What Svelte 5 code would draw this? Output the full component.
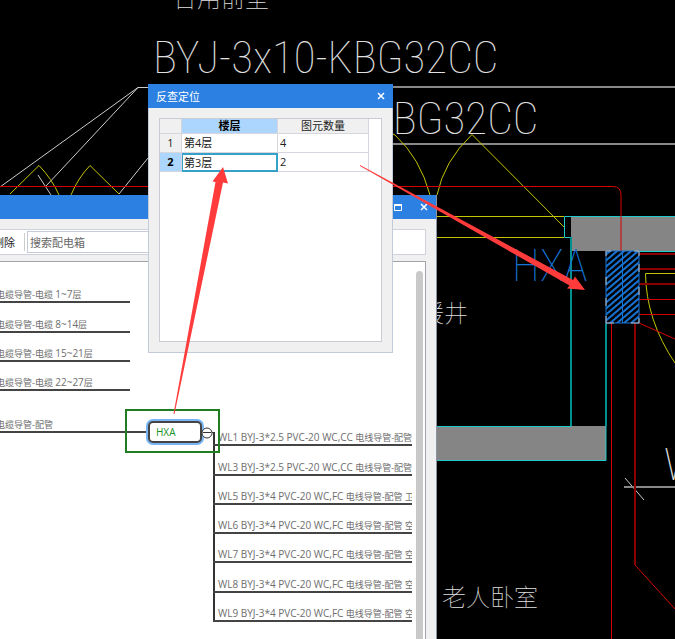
<script>
  const floors = [
    { name: '第4层', count: 4 },
    { name: '第3层', count: 2 }
  ];
  let selected = $state(1);
  let query = $state('');

  const risers = ['1~7', '8~14', '15~21', '22~27'];
  const circuits = [
    { cable: 'WL1 BYJ-3*2.5 PVC-20 WC,CC', conduit: '电线导管-配管' },
    { cable: 'WL3 BYJ-3*2.5 PVC-20 WC,CC', conduit: '电线导管-配管' },
    { cable: 'WL5 BYJ-3*4 PVC-20 WC,FC', conduit: '电线导管-配管 卫' },
    { cable: 'WL6 BYJ-3*4 PVC-20 WC,FC', conduit: '电线导管-配管 空' },
    { cable: 'WL7 BYJ-3*4 PVC-20 WC,FC', conduit: '电线导管-配管 空' },
    { cable: 'WL8 BYJ-3*4 PVC-20 WC,FC', conduit: '电线导管-配管 空' },
    { cable: 'WL9 BYJ-3*4 PVC-20 WC,FC', conduit: '电线导管-配管 空' }
  ];
</script>

<main class="desktop">
  <svg class="drawing" aria-label="CAD">
    <defs>
      <pattern id="hatch" width="7" height="6" patternUnits="userSpaceOnUse">
        <path d="M-1 7L8 -1M-1 1L1 -1M6 7L8 5" stroke="#1673d4" stroke-width="2" />
      </pattern>
    </defs>

    <g class="cad-text">
      <text x="173" y="7" class="zh">合用前室</text>
      <text x="153" y="73">BYJ-3x10-KBG32CC</text>
      <text x="193" y="134">BYJ-3x10-KBG32CC</text>
      <text x="420" y="322" class="zh">暖井</text>
      <text x="442" y="606" class="zh">老人卧室</text>
      <text x="664" y="480">W</text>
    </g>

    <g class="white">
      <path d="M0 187L138 87.500H148M138 87.500L46 186M38 175L51 195M119 194L148 158M625 478L644 500" />
      <path class="wide" d="M393 87H675M393 144H675M624 487H675" />
    </g>

    <path class="yellow" d="M10 194L39 165.500Q52 179 59 195M71 195Q78 178 90 165.500L119 194M393 134L395 135Q420 158 430 195M437 195Q444 161 472 134.500L564 227M437 216.500H564M437 237.500H564M675 273.500H645.500Q646 320 675 363" />

    <rect x="571" y="217" width="104" height="34" fill="#858585" />
    <rect x="437" y="426" width="169" height="35" fill="#858585" />
    <path class="cyan" d="M675 216.500H564.500V237.500H571M639 251.500H675M437 426.500H571M437 460.500H606V426" />
    <path class="teal" d="M571 237V426M606 323V426" />

    <path class="red" d="M0 186.500H613Q621 186.500 621 195V251M639 299.500H675M639 314.500H675M639 323L675 339M635 565L675 609" />
    <path class="red" d="M611.500 323V639" />
    <path class="dark-red" d="M639 254H675M639 269H675M639 284H675M635 323V565" />

    <rect x="606" y="251" width="33" height="72" fill="url(#hatch)" stroke="#1673d4" />
    <path d="M622.500 251V323" stroke="#1673d4" />
    <path d="M606 256V251H611M634 251H639V256M639 318V323H631M614 323H606V316M606 277V285M606 298V306M639 264V272M639 287V295" stroke="#bbb" fill="none" />
    <text x="512" y="281" class="tag">HXA</text>
  </svg>

  <section class="window browser">
    <header class="titlebar">
      <button aria-label="最大化">
        <svg width="8" height="7"><path d="M0.500 1V6.500H7.500V1" stroke-width="1" /><path d="M0 1H8" stroke-width="2" /></svg>
      </button>
      <button aria-label="关闭">
        <svg width="8" height="8"><path d="M1 1L7 7M7 1L1 7" /></svg>
      </button>
    </header>
    <div class="toolbar">
      <button class="delete">删除</button>
      <input type="text" aria-label="搜索配电箱" placeholder="搜索配电箱" bind:value={query} />
    </div>
    <div class="canvas">
      <ul class="wires risers">
        {#each risers as riser}
          <li><span>电缆导管-电缆 <span class="latin">{riser}</span>层</span></li>
        {/each}
      </ul>
      <div class="wires feed">电缆导管-配管</div>
      <button class="node">HXA</button>
      <ul class="wires circuits">
        {#each circuits as circuit}
          <li><span><span class="latin">{circuit.cable}</span> {circuit.conduit}</span></li>
        {/each}
      </ul>
      <button class="toggle" aria-label="折叠">
        <svg width="14" height="12"><circle cx="6" cy="6" r="5" /><path d="M2 5.500H10M11 5.500H14" /></svg>
      </button>
      <div class="highlight"></div>
      <div class="scrollbar"></div>
    </div>
  </section>

  <section class="window dialog" aria-label="反查定位">
    <header class="titlebar">
      <h1>反查定位</h1>
      <button aria-label="关闭">
        <svg width="8" height="8"><path d="M1 1L7 7M7 1L1 7" /></svg>
      </button>
    </header>
    <div class="sheet">
      <table>
        <thead>
          <tr><th class="index"></th><th class="floor active">楼层</th><th>图元数量</th></tr>
        </thead>
        <tbody>
          {#each floors as floor, i}
            <tr class:current={selected === i} onclick={() => (selected = i)}>
              <th scope="row">{i + 1}</th>
              <td class="name">{floor.name}</td>
              <td>{floor.count}</td>
            </tr>
          {/each}
        </tbody>
      </table>
    </div>
  </section>

  <svg class="arrows" aria-hidden="true">
    <path d="M173.500 414L215.500 182L212.500 181.500L223 167L228 183.500L223 182.500L174.500 414Z" />
    <path d="M360 165L573 280L575 276.500L585 290L567 288.500L569.500 285.500L360 166Z" />
  </svg>
</main>

<style>
  :global(body) {
    margin: 0;
    background: #000;
  }

  .desktop {
    position: relative;
    min-height: 100vh;
    overflow: hidden;
    background: #000;
    font-family: 'Open Sans', 'Noto Sans CJK SC', sans-serif;
    font-size: 11px;
    color: #222;
  }

  .drawing,
  .arrows {
    position: absolute;
    inset: 0;
    width: 100%;
    height: 100%;
  }

  .drawing path {
    fill: none;
  }

  .cad-text {
    fill: #e0e0e0;
    font-family: 'Liberation Sans Narrow', 'Roboto Condensed', 'Noto Sans CJK SC', sans-serif;
    font-size: 45px;
    font-weight: 100;
  }

  .cad-text .zh {
    font-family: 'Noto Sans CJK SC', sans-serif;
    font-size: 24px;
  }

  .tag {
    fill: #1673d4;
    font-family: 'Liberation Sans Narrow', 'Roboto Condensed', 'Noto Sans CJK SC', sans-serif;
    font-size: 45px;
    font-weight: 100;
  }

  .white { stroke: #ccc; }
  .white .wide { stroke: #888; stroke-width: 2; }
  .yellow { stroke: #c4c400; }
  .cyan { stroke: #1fcaca; }
  .teal { stroke: #009090; stroke-width: 2; }
  .red { stroke: #d60000; }
  .dark-red { stroke: #8c0000; stroke-width: 2; }

  .arrows {
    pointer-events: none;
    fill: #ff3b3b;
  }

  button {
    padding: 0;
    border: 0;
    background: none;
    font: inherit;
    color: inherit;
  }

  .window {
    position: absolute;
    display: flex;
    flex-direction: column;
    box-sizing: border-box;
    background: #f0f0f0;
  }

  .titlebar {
    display: flex;
    flex: none;
    align-items: center;
    justify-content: flex-end;
    height: 24px;
    padding: 0 8px;
    gap: 18px;
    background: #2c80e2;
    color: #fff;
  }

  .titlebar button {
    display: flex;
  }

  .titlebar svg {
    fill: none;
    stroke: #fff;
    stroke-width: 1.5;
  }

  .browser {
    top: 195px;
    bottom: 0;
    left: 0;
    width: 437px;
    border-right: 1px solid #8d93a3;
  }

  .toolbar {
    display: flex;
    align-items: center;
    box-sizing: border-box;
    height: 26px;
    margin: 10px 10px 0 0;
    border: 1px solid #cfd2da;
    border-left: 0;
    background: #fff;
  }

  .delete {
    flex: none;
    width: 25px;
    height: 18px;
    margin-right: 2px;
    border-right: 1px solid #ccc;
    text-indent: -7px;
    text-align: left;
    white-space: nowrap;
  }

  .toolbar input {
    box-sizing: border-box;
    width: 200px;
    height: 22px;
    padding: 0 2px;
    border: 1px solid #c5c9d8;
    font: inherit;
  }

  .toolbar input::placeholder {
    color: #666;
  }

  .canvas {
    position: relative;
    flex: 1;
    margin: 6px 10px 0 0;
    border: 1px solid #a0a3aa;
    border-width: 1px 1px 0 0;
    background: #fff;
    overflow: hidden;
  }

  .wires {
    position: absolute;
    margin: 0;
    padding: 0;
    list-style: none;
    font-size: 9px;
    line-height: 13px;
    color: #6e6e6e;
    white-space: nowrap;
  }

  .latin {
    font-size: 10px;
  }

  ul.wires {
    display: grid;
    grid-auto-rows: 1fr;
  }

  .wires li {
    display: flex;
    align-items: flex-end;
    overflow: hidden;
    border-bottom: 2px solid #444;
  }

  .risers {
    top: 12px;
    left: 0;
    width: 130px;
    height: 117px;
  }

  .risers li,
  .feed {
    text-indent: -4px;
  }

  .feed {
    top: 156px;
    left: 0;
    width: 148px;
    border-bottom: 2px solid #444;
  }

  .node {
    position: absolute;
    top: 159px;
    left: 148px;
    box-sizing: border-box;
    width: 54px;
    height: 22px;
    padding-left: 6px;
    border: 2px solid #444;
    border-radius: 5px;
    background: #fff;
    box-shadow: 0 0 0 2px #79b5f5;
    color: #18921f;
    font-size: 10px;
    text-align: left;
  }

  .circuits {
    top: 155px;
    left: 213px;
    width: 199px;
    height: 205px;
    background: linear-gradient(#333, #333) 0 16px / 2px 100% no-repeat;
  }

  .circuits li {
    padding-left: 5px;
  }

  .toggle {
    position: absolute;
    top: 165px;
    left: 201px;
    display: flex;
  }

  .toggle svg {
    fill: #fff;
    stroke: #333;
  }

  .highlight {
    position: absolute;
    top: 147px;
    left: 125px;
    width: 91px;
    height: 40px;
    border: 2px solid #217d21;
  }

  .scrollbar {
    position: absolute;
    top: 9px;
    right: 2px;
    bottom: -4px;
    width: 7px;
    border-radius: 4px;
    background: #c9c9c9;
  }

  .dialog {
    top: 84px;
    left: 148px;
    width: 245px;
    height: 269px;
    border: 1px solid #c5cad8;
    border-top: 0;
  }

  .dialog .titlebar {
    justify-content: space-between;
    margin: 0 -1px;
  }

  h1 {
    margin: 0;
    font-size: 11px;
    font-weight: 400;
  }

  .sheet {
    flex: 1;
    margin: 10px;
    border: 1px solid #c9ccd2;
    background: #fff;
  }

  table {
    width: 209px;
    border-collapse: separate;
    border-spacing: 0;
    table-layout: fixed;
    line-height: 14px;
  }

  th,
  td {
    box-sizing: border-box;
    height: 19px;
    padding: 0 2px;
    border: 1px solid #d5d6de;
    border-width: 0 1px 1px 0;
    font-weight: 400;
    text-align: left;
  }

  th {
    background: #f0f0f0;
    text-align: center;
  }

  thead th {
    height: 15px;
  }

  .index {
    width: 22px;
  }

  .floor {
    width: 96px;
  }

  .active,
  .current th {
    background: #add6ff;
    font-weight: 700;
    color: #000;
  }

  .current .name {
    padding: 0 2px 0 1px;
    border: 2px solid #35a0c8;
    border-left-width: 1px;
    line-height: 14px;
  }
</style>
